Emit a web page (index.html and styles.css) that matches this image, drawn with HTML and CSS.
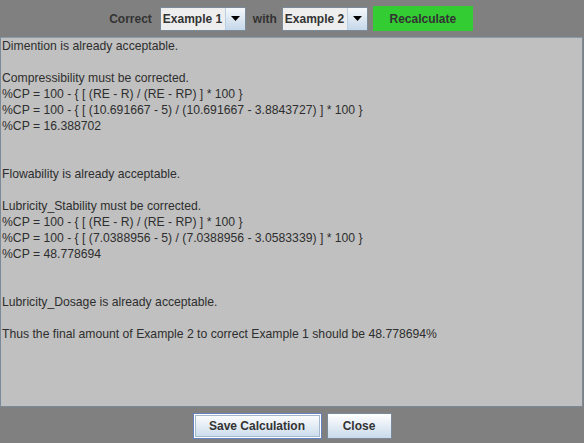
FILE: index.html
```html
<!DOCTYPE html>
<html>
<head>
<meta charset="utf-8">
<link rel="stylesheet" href="styles.css">
</head>
<body>
<div class="window">
  <div class="topbar">
    <span class="label first">Correct</span>
    <div class="combo">
      <span class="combo-text">Example 1</span>
      <span class="combo-arrow"><svg width="9" height="5" viewBox="0 0 9 5"><polygon points="0,0 9,0 4.5,5" fill="#000"/></svg></span>
    </div>
    <span class="label">with</span>
    <div class="combo second">
      <span class="combo-text">Example 2</span>
      <span class="combo-arrow"><svg width="9" height="5" viewBox="0 0 9 5"><polygon points="0,0 9,0 4.5,5" fill="#000"/></svg></span>
    </div>
    <button class="recalc">Recalculate</button>
  </div>
  <div class="textarea">
<div class="line">Dimention is already acceptable.</div>
<div class="line"></div>
<div class="line">Compressibility must be corrected.</div>
<div class="line">%CP = 100 - { [ (RE - R) / (RE - RP) ] * 100 }</div>
<div class="line">%CP = 100 - { [ (10.691667 - 5) / (10.691667 - 3.8843727) ] * 100 }</div>
<div class="line">%CP = 16.388702</div>
<div class="line"></div>
<div class="line"></div>
<div class="line">Flowability is already acceptable.</div>
<div class="line"></div>
<div class="line">Lubricity_Stability must be corrected.</div>
<div class="line">%CP = 100 - { [ (RE - R) / (RE - RP) ] * 100 }</div>
<div class="line">%CP = 100 - { [ (7.0388956 - 5) / (7.0388956 - 3.0583339) ] * 100 }</div>
<div class="line">%CP = 48.778694</div>
<div class="line"></div>
<div class="line"></div>
<div class="line">Lubricity_Dosage is already acceptable.</div>
<div class="line"></div>
<div class="line">Thus the final amount of Example 2 to correct Example 1 should be 48.778694%</div>
  </div>
  <div class="bottombar">
    <button class="btn focused">Save Calculation</button>
    <button class="btn">Close</button>
  </div>
</div>
</body>
</html>
```
FILE: styles.css
```css
html, body {
  margin: 0;
  padding: 0;
  background: #808080;
  font-family: "Liberation Sans", Arial, sans-serif;
}
.window {
  width: 584px;
  height: 443px;
  display: flex;
  flex-direction: column;
}
.topbar {
  height: 37px;
  display: flex;
  align-items: center;
  justify-content: center;
  padding-right: 2px;
}
.label {
  font-size: 12px;
  font-weight: bold;
  color: #333333;
  margin: 0 5px 0 0;
}
.label.first { margin-right: 8px; }
.combo {
  display: flex;
  width: 86px;
  height: 24px;
  border: 1px solid #7a8a99;
  box-sizing: border-box;
  margin-right: 7px;
}
.combo.second { margin-right: 5px; }
.combo-text {
  flex: 1;
  background: #eeeeee;
  font-size: 12px;
  font-weight: bold;
  color: #333333;
  display: flex;
  align-items: center;
  padding-left: 2px;
  box-sizing: border-box;
  border-right: 1px solid #b8cfe5;
}
.combo-arrow {
  width: 19px;
  background: linear-gradient(#f5f8fb, #d8e4f0 60%, #c5d7ea);
  display: flex;
  align-items: center;
  justify-content: center;
}
.recalc {
  width: 100px;
  height: 25px;
  margin: 0;
  padding: 0;
  border: none;
  background: #33cc33;
  font-family: "Liberation Sans", Arial, sans-serif;
  font-size: 12px;
  font-weight: bold;
  color: #333333;
}
.textarea {
  height: 370px;
  box-sizing: border-box;
  margin-right: 1px;
  background: #c0c0c0;
  border: 1px solid #7a8a99;
  border-top-color: #8a9aab;
  padding: 0 0 0 1px;
  font-size: 12.2px;
  color: #2e2e2e;
  overflow: hidden;
}
.line {
  height: 16px;
  line-height: 16px;
  white-space: pre;
}
.bottombar {
  flex: 1;
  display: flex;
  align-items: center;
  justify-content: center;
  gap: 5px;
  padding-top: 1px;
}
.btn {
  height: 26px;
  padding: 0 14px;
  border: 1px solid #7a8a99;
  background: linear-gradient(#ffffff, #e6eef6 45%, #c9daeb);
  font-family: "Liberation Sans", Arial, sans-serif;
  font-size: 12px;
  font-weight: bold;
  color: #333333;
  box-sizing: border-box;
}
.btn.focused {
  width: 129px;
  box-shadow: inset 0 0 0 1px #ffffff, inset 0 0 0 2px #a3b8cc;
  border-color: #6382bf;
}
.btn:not(.focused) { width: 65px; }
```
